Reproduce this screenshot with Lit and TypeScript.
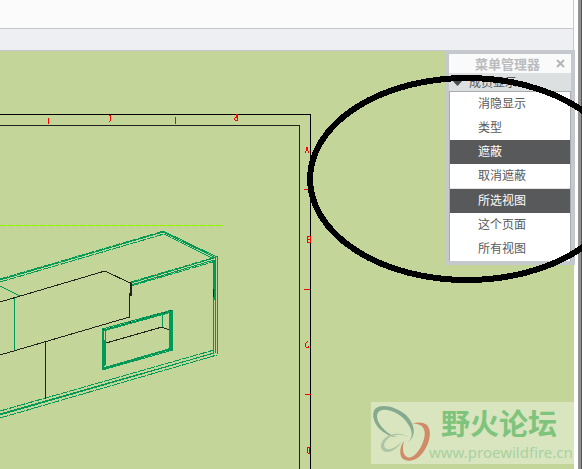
import { LitElement, html, css, svg } from "lit";
import { customElement, property, state } from "lit/decorators.js";
import { classMap } from "lit/directives/class-map.js";

interface Item {
  label: string;
  on?: boolean;
  divided?: boolean;
}

@customElement("sheet-drawing")
class SheetDrawing extends LitElement {
  static styles = css`
    :host { display: block; }
    svg { display: block; overflow: visible; }
    .edge { stroke: #009a58; }
    .dark { stroke: #20221d; }
    .frame { stroke: #000; }
    .tick { stroke: #f00; }
    .axis { stroke: #90f000; stroke-dasharray: 5 1 1 1; }
    .dash { stroke-dasharray: 8 1; }
  `;

  render() {
    // One user unit is one pixel; the origin is the top left of the window.
    return html`<svg width="582" height="418" viewBox="0 51 582 418" fill="none" aria-hidden="true" shape-rendering="crispEdges">
      ${svg`
      <path class="frame" d="M0 114.5H310.5V469"/>
      <path class="dark" d="M0 125.5H299.5V469"/>
      <path class="tick" d="M48.5 118v6M175.5 117v7M304 189.5h6M304 289.5h6M305 394.5h6"/>
      <path class="tick" d="M109 115.5h2M110.5 115v6M109.5 121v1M236.5 114v3M237.5 114v3M235 117.5h3M234.5 118v2M235 120.5h3M237.5 118v2"/>
      <path class="tick" d="M306 147.5h2M306.5 147v4M307.5 147v4M305.5 151v2M308.5 151v2M307.5 236v7M308 236.5h3M308 239.5h3M308 242.5h3M310.5 236v6M307.5 341v1M306.5 342v1M305.5 343v4M306 347.5h3M308.5 346v1M307.5 447v6M308 447.5h2M308 453.5h2M309.5 448v5"/>
      <path class="axis" d="M0 225.5H223"/>
      <path class="edge dash" d="M0 279L164 231M0 282L164 234L214 259"/>
      <path class="edge" d="M0 280L163 232L216 258M163 231L217 257"/>
      <path class="edge dash" d="M131 282L216 257M131 286L216 261"/>
      <path class="edge" d="M131 283L214 258M131 285L214 260M213.5 260V353M214.5 260V300M215.5 258V353M217.5 256V354"/>
      <path class="edge dash" d="M0 411L214 350M0 414L214 353M0 418L217 355"/>
      <path class="edge" d="M0 415L214 353M0 414L140 374"/>
      <path class="edge" d="M0 286L20 296M14.5 298V351"/>
      <path class="dark" d="M0 302L105 271L131 283.5V296M130.5 282V296M129.5 293V317L0 355M45.5 342V399M213.5 289v8"/>
      <path class="edge" d="M102.5 329V369M103.5 329V369M105.5 331V365M104.5 340V366M169.5 312V350M170.5 310V350M171.5 310V350M172.5 310V351"/>
      <path class="edge" d="M102 329L172 310M103 330L172 311M103 331L172 312M102 370L173 350M103 368L172 348M103 369L172 349"/>
      <path class="dark" stroke-dasharray="1 6" d="M103 330L172 310"/>
      <path class="dark" d="M106 343L162 327L169 330"/>
      <path class="edge" d="M162.5 314V327"/>
      `}
    </svg>`;
  }
}

@customElement("menu-manager")
class MenuManager extends LitElement {
  static styles = css`
    :host { display: block; }
    .window {
      box-sizing: border-box;
      border: 4px solid #c5c9cd;
      background: #fff;
      font: 12px/24px "Noto Sans CJK SC", sans-serif;
      color: #58595b;
    }
    header {
      display: flex;
      align-items: center;
      height: 19px;
      padding-left: 26px;
      background: #fafafa;
    }
    h2 {
      margin: 0;
      font-size: 13px;
      line-height: 19px;
      color: #b9bcbe;
      white-space: nowrap;
    }
    button {
      display: block;
      border: 0;
      margin: 0;
      padding: 0;
      background: none;
      font: inherit;
      color: inherit;
      text-align: left;
    }
    .close { margin-left: auto; margin-right: 6px; }
    .close svg, .group svg { display: block; flex: none; }
    .group {
      display: flex;
      align-items: center;
      gap: 5px;
      width: 100%;
      height: 18px;
      padding-left: 2px;
      background: #dce0e1;
      line-height: 18px;
    }
    ul {
      list-style: none;
      margin: 0;
      padding: 0;
      border: 1px solid #a9acae;
      border-width: 1px 1px 0;
    }
    .item { width: 100%; height: 24px; padding: 0 0 2px 28px; line-height: 22px; }
    .on { background: #58595b; color: #fff; }
    .divided { border-bottom: 1px solid #dfe1e2; }
  `;

  @property({ attribute: false }) items: Item[] = [];

  private toggle(item: Item) {
    item.on = !item.on;
    this.requestUpdate();
  }

  render() {
    return html`<section class="window">
      <header>
        <h2>菜单管理器</h2>
        <button class="close" aria-label="关闭">
          <svg width="9" height="9" viewBox="0 0 9 9"><path d="M1 1l7 7M8 1l-7 7" stroke="#b3b6b8" stroke-width="2"/></svg>
        </button>
      </header>
      <button class="group">
        <svg width="13" height="8" viewBox="0 0 13 8"><path d="M0 1h13L6.500 8z" fill="#4a4b4d"/></svg>
        <span>成员显示</span>
      </button>
      <ul>
        ${this.items.map(
          (item) => html`<li class=${classMap({ divided: !!item.divided })}>
            <button class=${classMap({ item: true, on: !!item.on })} @click=${() => this.toggle(item)}>${item.label}</button>
          </li>`
        )}
      </ul>
    </section>`;
  }
}

@customElement("forum-mark")
class ForumMark extends LitElement {
  static styles = css`
    :host { display: block; }
    .mark {
      display: flex;
      height: 62px;
      background: #d8e5bf;
    }
    svg { flex: none; display: block; }
    .words { display: flex; flex-direction: column; white-space: nowrap; }
    .name {
      padding-left: 12px;
      font: 700 29px/40px "Noto Sans CJK SC", sans-serif;
      color: #7fc47c;
    }
    a {
      font: 15px/20px "Noto Sans", sans-serif;
      color: #a9d1a0;
      text-decoration: none;
    }
  `;

  render() {
    return html`<div class="mark">
      <svg width="58" height="62" viewBox="0 0 58 62" overflow="visible" aria-hidden="true">
        <path fill="#86aa90" d="M37 40C45 35 45 23 35 13C25 4 9 1 4 7C-1 14 5 26 14 31C18 34 23 35 26 35C18 33 10 26 7 19C4 11 8 7 16 8C24 9 33 15 37 22C42 29 42 36 37 40Z"/>
        <path fill="#d08b68" d="M36 25C42 20 51 19 56 23C62 30 58 44 50 53C44 60 35 60 31 56C28 52 29 44 33 39C31 47 32 53 36 55C41 58 49 49 52 40C56 30 53 23 46 22C42 21 39 23 36 25Z"/>
        <path fill="#adc5a5" d="M37 35C30 30 19 31 13 37C8 43 9 49 16 50C22 50 28 45 31 39C27 44 21 48 16 47C11 45 13 39 19 35C25 32 31 32 37 35Z"/>
      </svg>
      <div class="words">
        <span class="name">野火论坛</span>
        <a href="#">www.proewildfire.cn</a>
      </div>
    </div>`;
  }
}

@customElement("app-root")
class AppRoot extends LitElement {
  static styles = css`
    :host { display: block; }
    .page {
      display: flex;
      box-sizing: border-box;
      min-height: 100vh;
      position: relative;
      overflow: hidden;
    }
    .main { flex: 1; min-width: 0; display: flex; flex-direction: column; }
    .ribbon, .tools {
      border-right: 1px solid #c5c9cd;
      border-bottom: 1px solid #c5c9cd;
    }
    .ribbon { height: 28px; background: #fbfbfb; }
    .tools { height: 21px; background: #edeff2; }
    .canvas {
      flex: 1;
      position: relative;
      overflow: hidden;
      background: #c3d599;
    }
    .gutter {
      width: 4px;
      background: #fdfdfd;
      border-right: 3px solid #929292;
    }
    .rim { width: 1px; background: #555; }
    .menu { position: absolute; top: 50px; right: 7px; width: 130px; }
    .stamp { position: absolute; right: 0; bottom: 5px; width: 203px; }
    .ring { position: absolute; top: 0; right: 0; pointer-events: none; }
  `;

  @state() private items: Item[] = [
    { label: "消隐显示" },
    { label: "类型" },
    { label: "遮蔽", on: true },
    { label: "取消遮蔽", divided: true },
    { label: "所选视图", on: true },
    { label: "这个页面" },
    { label: "所有视图" },
  ];

  render() {
    return html`<div class="page">
      <main class="main">
        <div class="ribbon"></div>
        <div class="tools"></div>
        <div class="canvas">
          <sheet-drawing></sheet-drawing>
          <forum-mark class="stamp"></forum-mark>
        </div>
      </main>
      <div class="gutter"></div>
      <div class="rim"></div>
      <menu-manager class="menu" .items=${this.items}></menu-manager>
      <svg class="ring" width="282" height="300" viewBox="300 0 282 300" fill="none" shape-rendering="crispEdges" aria-hidden="true">
        <ellipse cx="467" cy="179" rx="157" ry="101" stroke="#000" stroke-width="6"/>
      </svg>
    </div>`;
  }
}
